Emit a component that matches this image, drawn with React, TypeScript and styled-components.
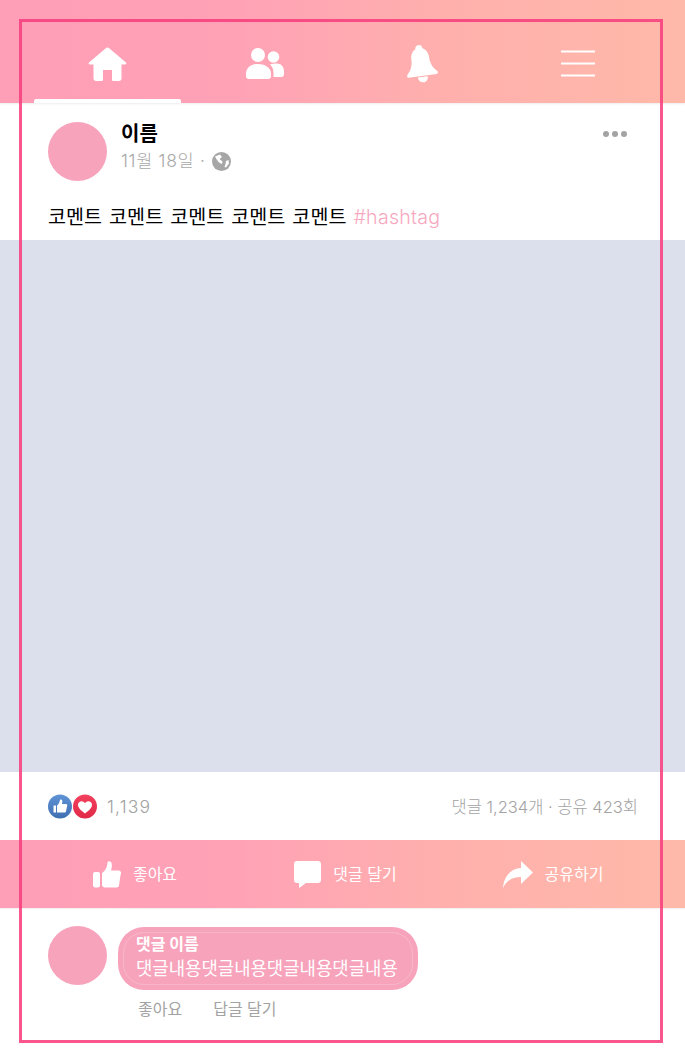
import React from "react";
import styled, { createGlobalStyle } from "styled-components";

const Global = createGlobalStyle`
  html, body { margin: 0; padding: 0; background: #fff; }
  * { box-sizing: border-box; }
  body { font-family: Inter, "Noto Sans CJK KR", "Noto Sans", sans-serif; }
`;

const Page = styled.div`
  position: relative;
  width: 685px;
  height: 1063px;
  overflow: hidden;
  background: #fff;
`;

const Frame = styled.div`
  position: absolute;
  left: 19px;
  top: 19px;
  width: 644px;
  height: 1024px;
  border: 3px solid rgba(247, 63, 125, 0.88);
  pointer-events: none;
`;

const gradient = "linear-gradient(90deg, #ff9eb7 0%, #ffa2b6 35%, #ffb0ad 65%, #ffb9a9 100%)";

const Nav = styled.nav`
  height: 103px;
  padding: 25px 22px 0 34px;
  display: grid;
  grid-template-columns: 147px 168px 144px 170px;
  background: ${gradient};
  box-shadow: 0 1px 2px rgba(0, 0, 0, 0.08);
`;

const NavItem = styled.div<{ $active?: boolean }>`
  position: relative;
  display: flex;
  align-items: center;
  justify-content: center;
  ${(p) =>
    p.$active &&
    `&::after {
      content: "";
      position: absolute;
      left: 0;
      right: 0;
      bottom: 0;
      height: 4px;
      background: #fff;
      border-radius: 2px 2px 0 0;
    }`}
`;

const Post = styled.header`
  height: 137px;
  padding: 18px 48px 0;
  display: flex;
  flex-direction: column;
`;

const PostTop = styled.div`
  display: flex;
  align-items: flex-start;
`;

const Avatar = styled.div`
  width: 59px;
  height: 59px;
  flex: none;
  border-radius: 50%;
  background: #f7a3bc;
`;

const PostAvatar = styled(Avatar)`
  margin-top: 1px;
`;

const Meta = styled.div`
  margin: 1px 0 0 14px;
  flex: 1;
`;

const Name = styled.div`
  font-size: 20px;
  line-height: 24px;
  font-weight: 700;
  color: #000;
`;

const DateRow = styled.div`
  margin-top: 4px;
  display: flex;
  align-items: center;
  gap: 6px;
  font-size: 17.5px;
  line-height: 22px;
  font-weight: 300;
  letter-spacing: 0.7px;
  color: #a8a8a8;
`;

const Dots = styled.div`
  display: flex;
  gap: 3px;
  margin: 10px 10px 0 0;
`;

const Dot = styled.span`
  width: 6px;
  height: 6px;
  border-radius: 50%;
  background: #a3a3a3;
`;

const Caption = styled.p`
  margin: 22px 0 0;
  font-size: 19.6px;
  line-height: 28px;
  font-weight: 400;
  word-spacing: 1.5px;
  color: #000;
  white-space: nowrap;
`;

const Hash = styled.span`
  color: #f7a8bf;
  font-weight: 300;
  letter-spacing: 0.25px;
`;

const Photo = styled.div`
  height: 532px;
  background: #dce0ec;
`;

const Stats = styled.div`
  height: 68px;
  padding: 0 47px 0 48px;
  display: flex;
  align-items: center;
  font-size: 16.5px;
  font-weight: 300;
  color: #a3a3a3;
`;

const Reactions = styled.div`
  display: flex;
  margin-right: 10px;
`;

const Count = styled.span`
  flex: 1;
  font-size: 17.5px;
  letter-spacing: 1.2px;
`;

const Actions = styled.div`
  height: 68px;
  padding: 0 30px;
  display: grid;
  grid-template-columns: 210px 211px 204px;
  background: ${gradient};
  box-shadow: 0 1px 1px rgba(0, 0, 0, 0.05);
`;

const Action = styled.div`
  display: flex;
  align-items: center;
  justify-content: center;
  gap: 12px;
  color: #fff;
  font-size: 16px;
  font-weight: 400;
`;

const ActionLabel = styled.span`
  position: relative;
  top: -1px;
`;

const CommentRow = styled.section`
  padding: 18px 48px 0;
  display: flex;
  align-items: flex-start;
`;

const Body = styled.div`
  margin-left: 11px;
`;

const Bubble = styled.div`
  position: relative;
  padding: 5px 20px 6px 18px;
  height: 63px;
  margin-top: 1px;
  border-radius: 26px;
  background: #f7a3bc;
  color: #fff;
  &::after {
    content: "";
    position: absolute;
    inset: 5px;
    border: 1px solid rgba(255, 255, 255, 0.2);
    border-radius: 21px;
  }
`;

const BubbleName = styled.div`
  font-size: 16px;
  line-height: 24px;
  font-weight: 700;
`;

const BubbleText = styled.div`
  font-size: 17.8px;
  line-height: 26px;
  font-weight: 400;
  white-space: nowrap;
`;

const Replies = styled.div`
  margin: 8px 0 0 20px;
  display: flex;
  gap: 31px;
  font-size: 16px;
  line-height: 22px;
  font-weight: 400;
  color: #a3a3a3;
`;

const Globe = () => (
  <svg width="19" height="19" viewBox="0 0 19 19">
    <circle cx="9.5" cy="9.5" r="9.5" fill="#a6a6a6" />
    <path d="M3 4.5 8 2.5l2 2.5-2.5 2 3 2.5-.5 2.5-3-1.5-2-2.5L3 4.5zM14 9l2.5-1 .5 3.5-3 4-1.5-.5 1-3L14 9z" fill="#fff" />
  </svg>
);

const Thumb = ({ size, color }: { size: number; color: string }) => (
  <svg width={size} height={size} viewBox="0 0 28 28">
    <rect x="0" y="12" width="7" height="15.5" rx="2" fill={color} />
    <path d="M9 13 C12 11 14 8 14.500 2.500 C14.700 .5 18.500 .5 18.800 4 C19 7 18.500 9 18 10.500 L25.500 10.500 C28.500 10.500 28.500 14 27.500 15 L26 25.500 C25.700 27 24.500 27.500 23 27.500 L12 27.500 C10.500 27.500 9 26.500 9 25 Z" fill={color} />
  </svg>
);

export default function App() {
  return (
    <Page>
      <Global />
      <Nav>
        <NavItem $active>
          <svg width="39" height="34" viewBox="0 0 38 34">
            <path d="M19 0.500 C19.800 .5 20.500 1 21 1.500 L37.500 15.500 C38.300 16.500 37.800 17.500 36.500 17.500 L33 17.500 L33 31.500 C33 33 32 34 30.500 34 L25 34 C24 34 23.500 33.500 23.500 32.500 L23.500 23 L14.500 23 L14.500 32.500 C14.500 33.500 14 34 13 34 L7.500 34 C6 34 5 33 5 31.500 L5 17.500 L1.500 17.500 C.2 17.500 -.3 16.500 .5 15.500 L17 1.500 C17.500 1 18.200 .5 19 .5 Z" fill="#fff" />
          </svg>
        </NavItem>
        <NavItem>
          <svg width="38" height="32" viewBox="0 0 38 32">
            <circle cx="12" cy="7" r="7" fill="#fff" />
            <circle cx="27.500" cy="9" r="5.800" fill="#fff" />
            <path d="M0 26 C0 19 6 16 12 16 C18 16 25 19 25 26 L25 28 C25 30 24 31 22 31 L3 31 C1 31 0 30 0 28 Z" fill="#fff" />
            <path d="M24 16.500 C26 15.500 29 15.500 31 15.500 C35 15.500 38 19 38 23 L38 26 C38 28 37 29 35.500 29 L27.500 29 L27.500 25 C27.500 21.500 26.500 18.500 24 16.500 Z" fill="#fff" />
          </svg>
        </NavItem>
        <NavItem>
          <svg width="34" height="38" viewBox="0 0 34 38">
            <g transform="rotate(-8 17 19)" fill="#fff">
              <circle cx="17" cy="3.500" r="3.500" />
              <path d="M17 3 C24 3 26 9 26 14 C26 21 29 25 32 28 C33 29.500 32.500 31 31 31 L3 31 C1.500 31 1 29.500 2 28 C5 25 8 21 8 14 C8 9 10 3 17 3 Z" />
              <path d="M12 32 L22 32 C22 35 20 37.500 17 37.500 C14 37.500 12 35 12 32 Z" />
            </g>
          </svg>
        </NavItem>
        <NavItem>
          <svg width="34" height="28" viewBox="0 0 34 28">
            <path d="M0 1.500H34M0 13.500H34M0 25.500H34" stroke="#fff" strokeWidth="2" />
          </svg>
        </NavItem>
      </Nav>

      <Post>
        <PostTop>
          <PostAvatar />
          <Meta>
            <Name>이름</Name>
            <DateRow>
              <span>11월 18일 ·</span>
              <Globe />
            </DateRow>
          </Meta>
          <Dots>
            <Dot />
            <Dot />
            <Dot />
          </Dots>
        </PostTop>
        <Caption>
          코멘트 코멘트 코멘트 코멘트 코멘트 <Hash>#hashtag</Hash>
        </Caption>
      </Post>

      <Photo />

      <Stats>
        <Reactions>
          <svg width="49" height="25" viewBox="0 0 49 25">
            <defs>
              <linearGradient id="blue" x1="0" y1="0" x2="0" y2="1">
                <stop offset="0" stopColor="#5f93d6" />
                <stop offset="1" stopColor="#3f70b0" />
              </linearGradient>
              <linearGradient id="red" x1="0" y1="0" x2="0" y2="1">
                <stop offset="0" stopColor="#f2405e" />
                <stop offset="1" stopColor="#e02a48" />
              </linearGradient>
            </defs>
            <circle cx="12" cy="12.500" r="12" fill="url(#blue)" />
            <path d="M5.500 11.500H8V18.500H5.500zM9 11.500C10.500 10.500 11.500 8.500 12 6C12.300 5 14.500 5.500 14.300 7.500L14 10H18C19.500 10 19.500 11.500 19 12.500L18 17.500C17.800 18.300 17 18.500 16.500 18.500H9Z" fill="#fff" />
            <circle cx="37" cy="12.500" r="12" fill="url(#red)" />
            <path d="M37 19.500C33 16.500 30 14 30 10.800C30 8.500 31.800 7.200 33.500 7.200C35 7.200 36.300 8 37 9.300C37.700 8 39 7.200 40.500 7.200C42.200 7.200 44 8.500 44 10.800C44 14 41 16.500 37 19.500Z" fill="#fff" />
          </svg>
        </Reactions>
        <Count>1,139</Count>
        <span>댓글 1,234개 · 공유 423회</span>
      </Stats>

      <Actions>
        <Action>
          <Thumb size={28} color="#fff" />
          <ActionLabel>좋아요</ActionLabel>
        </Action>
        <Action>
          <svg width="27" height="27" viewBox="0 0 27 27">
            <path d="M3 0H24C25.700 0 27 1.300 27 3V19C27 20.700 25.700 22 24 22H12L6 26.500C5.500 27 5 26.500 5 26V22H3C1.300 22 0 20.700 0 19V3C0 1.300 1.300 0 3 0Z" fill="#fff" />
          </svg>
          <ActionLabel>댓글 달기</ActionLabel>
        </Action>
        <Action>
          <svg width="30" height="27" viewBox="0 0 30 27">
            <path d="M18 0 L30 11.500 L18 23 L18 16 C10 16 4 19 0 27 C1 15 8 7.500 18 7 Z" fill="#fff" />
          </svg>
          <ActionLabel>공유하기</ActionLabel>
        </Action>
      </Actions>

      <CommentRow>
        <Avatar />
        <Body>
          <Bubble>
            <BubbleName>댓글 이름</BubbleName>
            <BubbleText>댓글내용댓글내용댓글내용댓글내용</BubbleText>
          </Bubble>
          <Replies>
            <span>좋아요</span>
            <span>답글 달기</span>
          </Replies>
        </Body>
      </CommentRow>

      <Frame />
    </Page>
  );
}
